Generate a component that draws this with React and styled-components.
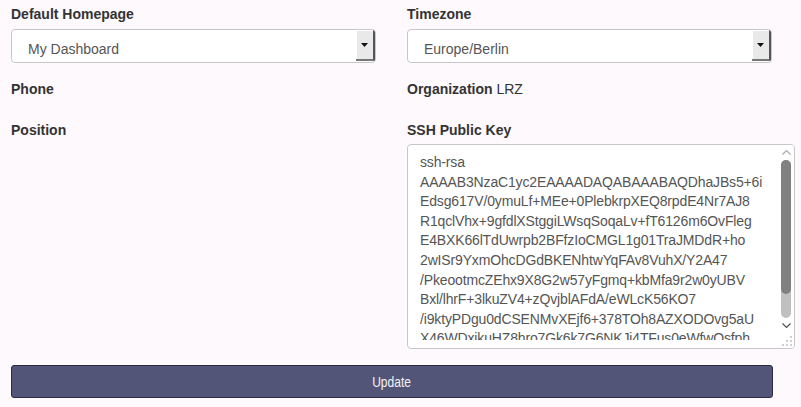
import React from 'react';
import styled, { createGlobalStyle } from 'styled-components';

const GlobalStyle = createGlobalStyle`
    body {
        margin: 0;
        background: #fdf9fd;
        font-family: "Liberation Sans", Arial, sans-serif;
        color: #333;
    }
`;

const sshKey = [
    'ssh-rsa',
    'AAAAB3NzaC1yc2EAAAADAQABAAABAQDhaJBs5+6i',
    'Edsg617V/0ymuLf+MEe+0PlebkrpXEQ8rpdE4Nr7AJ8',
    'R1qclVhx+9gfdlXStggiLWsqSoqaLv+fT6126m6OvFleg',
    'E4BXK66lTdUwrpb2BFfzIoCMGL1g01TraJMDdR+ho',
    '2wISr9YxmOhcDGdBKENhtwYqFAv8VuhX/Y2A47',
    '/PkeootmcZEhx9X8G2w57yFgmq+kbMfa9r2w0yUBV',
    'Bxl/lhrF+3lkuZV4+zQvjblAFdA/eWLcK56KO7',
    '/i9ktyPDgu0dCSENMvXEjf6+378TOh8AZXODOvg5aU',
    'X46WDxikuHZ8hro7Gk6k7G6NKJi4TFus0eWfwOsfph',
    'Qw3vTn8sLkR2pZcYhM5aJdE1uGfXbN7oK4iVyWq== lrz',
    '@lrz.de',
].join('\n');

const Dropdown = ({ value }) => (
    <SelectBox>
        <SelectInput defaultValue={value}>
            <option>{value}</option>
        </SelectInput>
        <ArrowButton>
            <svg width="7" height="4" viewBox="0 0 7 4"><path d="M0 0h7L3.5 4z" fill="#111" /></svg>
        </ArrowButton>
    </SelectBox>
);

const Chevron = ({ up }) => (
    <svg width="15" height="15" viewBox="0 0 15 15">
        <path
            d={up ? 'M3.5 9.5l4-4 4 4' : 'M3.5 5.5l4 4 4-4'}
            fill="none"
            stroke={up ? '#a8a8a8' : '#505050'}
            strokeWidth="1.2"
        />
    </svg>
);

const Grip = () => (
    <svg width="15" height="15" viewBox="0 0 15 15">
        {[[11, 3], [7, 7], [11, 7], [3, 11], [7, 11], [11, 11]].map(([x, y]) => (
            <rect key={`${x}-${y}`} x={x} y={y} width="2" height="2" fill="#cfcfcf" />
        ))}
    </svg>
);

const App = () => {
    return (
        <Page>
            <GlobalStyle />
            <Form onSubmit={(e) => e.preventDefault()}>
                <Field>
                    <Label>Default Homepage</Label>
                    <Dropdown value='My Dashboard' />
                </Field>
                <Field>
                    <Label>Timezone</Label>
                    <Dropdown value='Europe/Berlin' />
                </Field>
                <Field $top={16}>
                    <Label>Phone</Label>
                </Field>
                <Field $top={16}>
                    <Label>Organization <Value>LRZ</Value></Label>
                </Field>
                <Field $top={21}>
                    <Label>Position</Label>
                </Field>
                <Field $top={21}>
                    <Label>SSH Public Key</Label>
                    <KeyBox>
                        <KeyArea defaultValue={sshKey} spellCheck={false} />
                        <Rail>
                            <RailButton><Chevron up /></RailButton>
                            <Track><Thumb style={{ height: '85%' }} /></Track>
                            <RailButton><Chevron /></RailButton>
                            <RailButton><Grip /></RailButton>
                        </Rail>
                    </KeyBox>
                </Field>
            </Form>
            <UpdateButton type='button'><ButtonText>Update</ButtonText></UpdateButton>
        </Page>
    );
}

export default App;

const Page = styled.div`
    padding: 4px 0 0 11px;
    width: 801px;
    box-sizing: border-box;
`;

const Form = styled.form`
    display: grid;
    grid-template-columns: 385px 385px;
    column-gap: 11px;
    align-items: start;
`;

const Field = styled.div`
    display: flex;
    flex-direction: column;
    gap: 4px;
    margin-top: ${(p) => p.$top || 0}px;
`;

const Label = styled.label`
    font-size: 14px;
    line-height: 20px;
    font-weight: bold;
    color: #333;
`;

const Value = styled.span`
    font-weight: normal;
`;

const SelectBox = styled.div`
    display: flex;
    width: 365px;
    height: 34px;
    margin-top: 1px;
    box-sizing: border-box;
    border: 1px solid #c8c6c8;
    border-radius: 4px;
    background: #fff;
    overflow: hidden;
`;

const SelectInput = styled.select`
    flex: 1;
    appearance: none;
    border: none;
    background: transparent;
    padding: 5px 0 0 16px;
    font-family: "Liberation Sans", Arial, sans-serif;
    font-size: 14px;
    color: #555;
    outline: none;
`;

const ArrowButton = styled.span`
    display: flex;
    align-items: center;
    justify-content: center;
    width: 17px;
    margin: 0 0 1px 0;
    background: #e9e9e9;
    border-right: 2px solid #555;
    border-bottom: 2px solid #777;
    box-shadow: inset 1px 1px 0 #fff;
`;

const KeyBox = styled.div`
    display: flex;
    width: 388px;
    height: 205px;
    box-sizing: border-box;
    border: 1px solid #c8c6c8;
    border-radius: 4px;
    background: #fff;
    overflow: hidden;
`;

const KeyArea = styled.textarea`
    flex: 1;
    min-width: 0;
    margin-bottom: 8px;
    padding: 8px 0 0 12px;
    border: none;
    background: transparent;
    font-family: "Liberation Sans", Arial, sans-serif;
    font-size: 14px;
    letter-spacing: -0.15px;
    line-height: 1.4;
    color: #555;
    white-space: pre;
    overflow: hidden;
    resize: none;
    outline: none;
`;

const Rail = styled.div`
    display: flex;
    flex-direction: column;
    width: 15px;
    background: #fff;
`;

const RailButton = styled.div`
    display: flex;
    height: 15px;
    flex: none;
`;

const Track = styled.div`
    flex: 1;
    margin: 0 3px 0 2px;
    border-radius: 5px;
    background: #c0c0c0;
`;

const Thumb = styled.div`
    border-radius: 5px;
    background: #808080;
`;

const UpdateButton = styled.button`
    display: block;
    width: 762px;
    height: 33px;
    margin-top: 16px;
    border: 1px solid #2c2b45;
    border-radius: 3px;
    background: #525478;
    color: #f2f2f2;
    font-family: "Liberation Sans", Arial, sans-serif;
    font-size: 14px;
    cursor: pointer;
`;

const ButtonText = styled.span`
    display: inline-block;
    transform: scaleX(0.86);
`;
